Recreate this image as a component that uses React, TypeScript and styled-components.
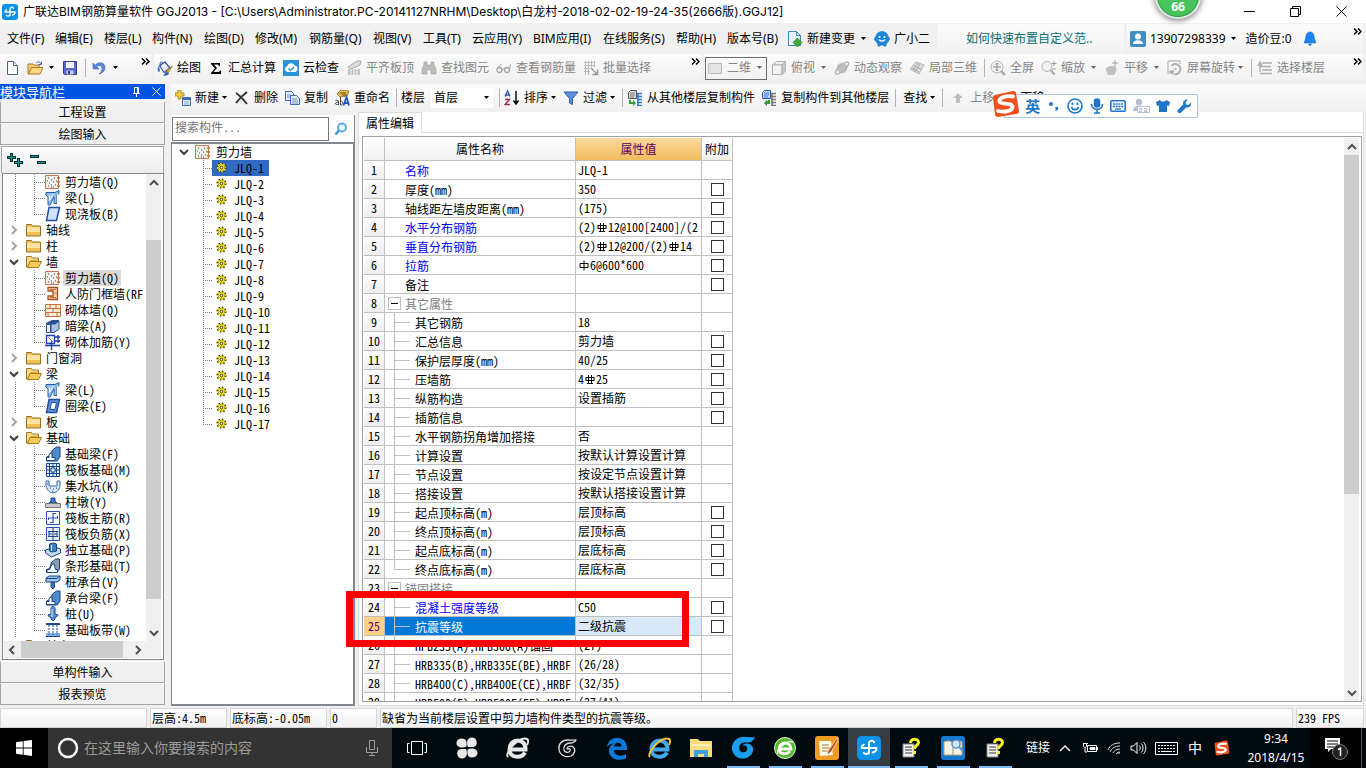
import React from 'react';
import styled, { createGlobalStyle, css } from 'styled-components';

const uiFont = '"Noto Sans", "Noto Sans CJK SC", sans-serif';
const gridFont = '"Noto Sans Mono CJK SC", "Noto Sans CJK SC", monospace';

const Global = createGlobalStyle`
  *, *::before, *::after { box-sizing: border-box; }
  body { margin: 0; background: #f0f0f0; }
  button, input, select { font: inherit; color: inherit; margin: 0; padding: 0; border: 0; background: none; border-radius: 0; }
  ul { list-style: none; margin: 0; padding: 0; }
  svg { display: block; flex: none; }
`;

const Shell = styled.div`
  position: relative;
  display: flex;
  flex-direction: column;
  height: 100vh;
  overflow: hidden;
  font: 12px/16px ${uiFont};
  color: #000;
  background: #f0f0f0;
  white-space: nowrap;
`;

/* ---------- title and menu ---------- */

const TitleBar = styled.header`
  display: flex;
  align-items: center;
  flex: none;
  height: 23px;
  padding-left: 2px;
  background: #fff;
`;
const Title = styled.h1`
  flex: 1;
  margin: 0 0 0 5px;
  font: 400 12px/16px "Inter", "Noto Sans CJK SC", sans-serif;
`;
const WindowButton = styled.button`
  display: flex;
  justify-content: center;
  align-items: center;
  width: 46px;
  height: 20px;
`;
const WindowButtons = styled.div`
  display: flex;
  padding-right: 2px;
`;

const MenuBar = styled.nav`
  display: flex;
  align-items: center;
  flex: none;
  height: 31px;
  padding: 1px 0 1px 7px;
`;
const MenuItem = styled.button<{ $w: number }>`
  width: ${p => p.$w}px;
  flex: none;
  text-align: left;
`;
const MenuPanel = styled.div<{ $grow?: boolean }>`
  display: flex;
  align-items: center;
  height: 29px;
  flex: ${p => (p.$grow ? '1' : '0 0 187px')};
  margin-right: 3px;
  background: linear-gradient(#fbfbfb, #f3f3f3);
  padding-left: 3px;
`;
const Tip = styled.a`
  padding-left: 26px;
  color: #0a6e6e;
  text-decoration: none;
`;
const UserName = styled.button`
  display: flex;
  align-items: center;
  gap: 4px;
`;
const Coins = styled.span`
  margin: 0 10px 0 9px;
`;
const Spacer = styled.span`
  flex: 1;
`;
const More = styled.button`
  align-self: flex-start;
  width: 12px;
  height: 15px;
  display: flex;
  align-items: center;
  justify-content: center;
`;

/* ---------- tool bars ---------- */

const ToolRow = styled.div`
  display: flex;
  flex: none;
  height: 30px;
  gap: 3px;
  padding-right: 3px;
`;
const Band = styled.div<{ $w?: number; $pad?: number; $gap?: number }>`
  display: flex;
  align-items: center;
  gap: ${p => p.$gap ?? 7}px;
  height: 28px;
  padding-left: ${p => p.$pad ?? 4}px;
  ${p => (p.$w ? `flex: 0 0 ${p.$w}px;` : 'flex: 1;')}
  background: linear-gradient(#fcfcfc, #f0f0f0);
  min-width: 0;
`;
const ComponentBar = styled(Band)`
  flex: 0 0 28px;
`;
const ToolButton = styled.button<{ $off?: boolean }>`
  display: flex;
  align-items: center;
  gap: 4px;
  flex: none;
  color: ${p => (p.$off ? '#868686' : '#000')};
`;
const CaretBox = styled.span<{ $tight?: boolean }>`
  margin-left: ${p => (p.$tight ? -2 : 1)}px;
`;
const Sep = styled.span<{ $room?: boolean }>`
  flex: none;
  width: 1px;
  height: 18px;
  margin-right: ${p => (p.$room ? 1 : -2)}px;
  background: #b4b4b4;
`;
const ComboFrame = styled.label<{ $boxed?: boolean }>`
  display: flex;
  align-items: center;
  flex: none;
  gap: 4px;
  width: 62px;
  height: ${p => (p.$boxed ? 23 : 20)}px;
  margin-right: ${p => (p.$boxed ? -3 : 0)}px;
  padding: 0 3px 0 ${p => (p.$boxed ? 1 : 3)}px;
  border: ${p => (p.$boxed ? '1px solid #6e6e6e' : '0')};
  background: ${p => (p.$boxed ? 'transparent' : '#fff')};
  color: ${p => (p.$boxed ? '#868686' : '#000')};
`;
const Combo = styled.select`
  appearance: none;
  flex: 1;
  min-width: 0;
  outline: 0;
`;

/* ---------- left navigation ---------- */

const Body = styled.div`
  position: relative;
  display: flex;
  flex: 1;
  min-height: 0;
`;
const Nav = styled.aside`
  display: flex;
  flex-direction: column;
  flex: 0 0 165px;
  padding-bottom: 1px;
  font-family: ${gridFont};
`;
const NavHead = styled.div`
  display: flex;
  align-items: center;
  flex: none;
  height: 15px;
  margin-bottom: 2px;
  padding-right: 4px;
  gap: 11px;
  background: #0054e3;
  color: #fff;
`;
const NavTitle = styled.h2`
  flex: 1;
  margin: 0;
  font-size: 13px;
  line-height: 15px;
  font-weight: 400;
`;
const NavButton = styled.button`
  flex: none;
  height: 22px;
  border: 1px solid #a5a5a5;
  border-top-color: #fff;
  background: #f0f0f0;
  text-align: center;
`;
const NavTools = styled.div`
  display: flex;
  align-items: center;
  flex: none;
  height: 27px;
  margin: 1px 1px 0;
  padding-left: 5px;
  gap: 7px;
  border: 1px solid #a5a5a5;
  border-bottom: 0;
  background: linear-gradient(#fdfdfd, #ececec);
`;
const TreeFrame = styled.div`
  display: grid;
  grid-template-columns: 1fr 15px;
  grid-template-rows: 1fr 17px;
  flex: 1;
  min-height: 0;
  margin: 0 1px 1px 2px;
  padding: 0 2px 1px 1px;
  border: 1px solid #828790;
  background: #fff;
`;
const Tree = styled.ul`
  overflow: hidden;
  min-height: 0;
`;
const Bar = styled.div<{ $flat?: boolean }>`
  display: flex;
  flex: none;
  flex-direction: ${p => (p.$flat ? 'row' : 'column')};
  align-items: stretch;
  background: #f0f0f0;
`;
const GridBar = styled(Bar)`
  width: 15px;
  margin-right: 2px;
`;
const Arrow = styled.button`
  display: flex;
  align-items: center;
  justify-content: center;
  flex: 0 0 17px;
`;
const Track = styled.span<{ $grow: number }>`
  flex: ${p => p.$grow};
`;
const Thumb = styled(Track)`
  background: #cdcdcd;
`;
const Corner = styled.div`
  background: #f0f0f0;
`;

const dotsV = 'repeating-linear-gradient(#808080 0 1px, transparent 1px 2px)';
const dotsH = 'repeating-linear-gradient(90deg, #808080 0 1px, transparent 1px 2px)';

const Node = styled.li<{ $level: number; $last?: boolean }>`
  display: flex;
  align-items: center;
  height: 16px;
  padding-left: ${p => (p.$level ? 41 : 3)}px;
  ${p =>
    p.$level &&
    css`
      background:
        ${dotsV} 11px 0 / 1px 100% no-repeat,
        ${dotsV} 30px 0 / 1px ${p.$last ? '9px' : '100%'} no-repeat,
        ${dotsH} 30px 8px / 11px 1px no-repeat;
    `}
`;
const Chevron = styled.span`
  width: 16px;
  margin-right: 3px;
  padding-left: 1px;
`;
const NodeText = styled.span<{ $on?: boolean }>`
  height: 16px;
  margin-left: 2px;
  padding: 0 2px;
  background: ${p => (p.$on ? '#d9d9d9' : 'transparent')};
`;

/* ---------- component list ---------- */

const Work = styled.div`
  display: flex;
  flex-direction: column;
  flex: 1;
  min-width: 0;
  padding: 0 0 0 6px;
`;
const Columns = styled.div`
  display: flex;
  flex: 1;
  min-height: 0;
  gap: 3px;
  padding-right: 2px;
`;
const ListPanel = styled.section`
  display: flex;
  flex-direction: column;
  flex: 0 0 184px;
  margin: 3px 0 0;
  font-family: ${gridFont};
`;
const SearchRow = styled.div`
  display: flex;
  align-items: center;
  flex: none;
  height: 27px;
  padding: 1px;
  background: #fff;
  border-right: 1px solid #828790;
`;
const Search = styled.input`
  flex: 1;
  min-width: 0;
  height: 24px;
  padding: 0 2px 4px;
  border: 1px solid #7a7a7a;
  background: #fff;
  &::placeholder { color: #757575; opacity: 1; }
`;
const SearchButton = styled.button`
  display: flex;
  align-items: center;
  justify-content: center;
  width: 24px;
`;
const ListBox = styled.ul`
  flex: 1;
  min-height: 0;
  overflow: hidden;
  border: 1px solid #828790;
  border-width: 2px 2px 2px 1px;
  background: #fff;
`;
const RootItem = styled.li`
  display: flex;
  align-items: center;
  height: 16px;
  padding-left: 6px;
  gap: 5px;
`;
const Item = styled.li<{ $last?: boolean }>`
  display: flex;
  height: 16px;
  padding-left: 40px;
  background:
    ${dotsV} 31px 0 / 1px ${p => (p.$last ? '9px' : '100%')} no-repeat,
    ${dotsH} 31px 8px / 10px 1px no-repeat;
`;
const ItemLabel = styled.span<{ $on?: boolean }>`
  display: flex;
  align-items: center;
  gap: 6px;
  padding: 0 5px 0 4px;
  background: ${p => (p.$on ? '#316ac5' : 'transparent')};
`;

/* ---------- property editor ---------- */

const Editor = styled.section`
  display: flex;
  flex-direction: column;
  flex: 1;
  min-width: 0;
  border: 1px solid #dcdcdc;
  border-top: 0;
  background: #fff;
  font-family: ${gridFont};
`;
const TabStrip = styled.div`
  display: flex;
  flex: none;
  height: 21px;
`;
const Tab = styled.button`
  width: 63px;
  border-right: 1px solid #dcdcdc;
  border-top: 1px solid #dcdcdc;
`;
const TabRest = styled.span`
  flex: 1;
  border-bottom: 1px solid #dcdcdc;
`;
const GridFrame = styled.div`
  display: flex;
  flex: 1;
  min-height: 0;
  margin: 3px 1px 3px 3px;
  padding: 1px 0 0 1px;
  border: 1px solid #a0a0a0;
`;
const GridView = styled.div`
  flex: 1;
  min-width: 0;
  overflow: hidden;
`;
const Table = styled.table`
  width: 369px;
  table-layout: fixed;
  border-collapse: separate;
  border-spacing: 0;
`;
const Head = styled.th<{ $w: number; $hot?: boolean }>`
  width: ${p => p.$w}px;
  height: 23px;
  padding: 0;
  font-weight: 400;
  border-right: 1px solid #bfbfbf;
  border-bottom: 1px solid #bfbfbf;
  background: ${p => (p.$hot ? 'linear-gradient(#fad79b, #f2bd5f)' : 'linear-gradient(#fff, #f0f0f0)')};
  color: ${p => (p.$hot ? '#5b005b' : '#000')};
`;
const RowHead = styled.th<{ $on?: boolean }>`
  height: 19px;
  padding: 0;
  font-weight: 400;
  line-height: 16px;
  border-right: 1px solid #bfbfbf;
  border-bottom: 1px solid #bfbfbf;
  background: ${p => (p.$on ? '#ffd08a' : 'linear-gradient(#fcfcfc, #eee)')};
  color: ${p => (p.$on ? '#5b005b' : '#000')};
`;
const Cell = styled.td<{ $bg?: string; $color?: string }>`
  height: 19px;
  padding: 0;
  border-right: 1px solid #bfbfbf;
  border-bottom: 1px solid #bfbfbf;
  background: ${p => p.$bg ?? '#fff'};
  color: ${p => p.$color ?? '#000'};
`;
const NameLine = styled.div`
  display: flex;
  height: 18px;
  padding-top: 2px;
  overflow: hidden;
  line-height: 16px;
`;
const Guide = styled.span<{ $kind: 'none' | 'group' | 'mid' | 'last' }>`
  flex: none;
  width: ${p => (p.$kind === 'mid' || p.$kind === 'last' ? 30 : 20)}px;
  height: 18px;
  margin-top: -2px;
  padding: 3px 0 0 3px;
  ${p =>
    (p.$kind === 'mid' || p.$kind === 'last') &&
    css`
      background:
        linear-gradient(#bfbfbf, #bfbfbf) 9px 0 / 1px ${p.$kind === 'last' ? '9px' : '100%'} no-repeat,
        linear-gradient(#bfbfbf, #bfbfbf) 9px 9px / 16px 1px no-repeat;
    `}
`;
const Fold = styled.button`
  display: flex;
  align-items: center;
  justify-content: center;
  width: 13px;
  height: 13px;
  border: 1px solid #bfbfbf;
`;
const ValueLine = styled.div`
  display: flex;
  align-items: center;
  height: 18px;
  padding-left: 2px;
  overflow: hidden;
  line-height: 16px;
`;
const Check = styled.input`
  appearance: none;
  display: block;
  width: 13px;
  height: 13px;
  margin: 1px auto 0;
  border: 1px solid #333;
  background: #fff;
`;

const Highlight = styled.div`
  position: absolute;
  left: 346px;
  top: 507px;
  width: 343px;
  height: 56px;
  border: 7px solid #f00;
  pointer-events: none;
`;

/* ---------- status bar and task bar ---------- */

const Status = styled.footer`
  display: flex;
  flex: none;
  gap: 3px;
  height: 22px;
  padding: 2px 2px 0 0;
  font-family: ${gridFont};
`;
const StatusCell = styled.span<{ $w?: number }>`
  ${p => (p.$w ? `flex: 0 0 ${p.$w}px;` : 'flex: 1;')}
  padding-left: 1px;
  line-height: 18px;
  border: 1px solid #d6d6d6;
  background: linear-gradient(#fff, #f0f0f0);
`;

const TaskBar = styled.footer`
  display: flex;
  flex: none;
  height: 40px;
  background: #010b0f;
  color: #fff;
`;
const Start = styled.button`
  display: flex;
  align-items: center;
  justify-content: center;
  width: 48px;
  background: #000;
`;
const TaskSearch = styled.label`
  display: flex;
  align-items: center;
  flex: 0 0 344px;
  gap: 4px;
  padding: 0 13px 0 8px;
  background: #333;
  color: #9c9c9c;
`;
const TaskInput = styled.input`
  flex: 1;
  min-width: 0;
  font-size: 14px;
  line-height: 20px;
  &::placeholder { color: #9a9a9a; opacity: 1; }
`;
const TaskApp = styled.button<{ $wide?: boolean; $open?: boolean; $on?: boolean }>`
  display: flex;
  align-items: center;
  justify-content: center;
  width: ${p => (p.$wide ? 50 : 42)}px;
  background: ${p => (p.$on ? '#343e42' : 'transparent')};
  background-image: ${p =>
    p.$open ? 'linear-gradient(#7cb8f5, #7cb8f5)' : 'none'};
  background-repeat: no-repeat;
  background-position: ${p => (p.$on ? '0 100%' : '5px 100%')};
  background-size: ${p => (p.$on ? '100% 2px' : '33px 2px')};
`;
const Pinned = styled.div`
  display: flex;
  margin-right: 4px;
`;
const Tray = styled.div`
  display: flex;
  align-items: center;
  flex: 1;
  justify-content: flex-end;
`;
const TrayItem = styled.button<{ $w: number }>`
  display: flex;
  align-items: center;
  justify-content: center;
  flex: none;
  width: ${p => p.$w}px;
  height: 40px;
`;
const InputMode = styled(TrayItem)`
  font-size: 14px;
`;
const Clock = styled.time`
  width: 68px;
  margin-left: 6px;
  text-align: center;
  line-height: 19px;
`;
const Notice = styled.button`
  display: flex;
  align-items: center;
  align-self: stretch;
  width: 52px;
  padding-left: 14px;
  margin-right: 4px;
  background: #000;
  border-right: 1px solid #555;
`;

/* ---------- floating pieces ---------- */

const Ball = styled.div`
  position: absolute;
  right: 165px;
  top: -26px;
  width: 46px;
  height: 45px;
  padding-top: 23px;
  border-radius: 50%;
  border: 2px solid #e2e6e3;
  background: #46c45b;
  box-shadow: inset 0 0 0 1px #2f9a45, 0 1px 6px rgba(0, 0, 0, 0.6);
  color: #fff;
  font-weight: 700;
  font-size: 12px;
  text-align: center;
`;
const Ime = styled.div`
  position: absolute;
  right: 168px;
  top: 94px;
  display: flex;
  align-items: center;
  width: 194px;
  height: 24px;
  padding-left: 17px;
  border: 1px solid #b3c5dc;
  background: #fff;
  color: #1f76c8;
`;
const ImeLogo = styled.span`
  position: absolute;
  left: -13px;
  top: -5px;
`;
const ImeKey = styled.button<{ $w?: number }>`
  display: flex;
  justify-content: center;
  width: ${p => p.$w ?? 22}px;
  font-size: 15px;
  font-weight: 700;
  line-height: 22px;
`;

/* ---------- small drawings ---------- */

const Caret = ({ color = '#000' }: { color?: string }) => (
  <svg width="7" height="4" viewBox="0 0 7 4"><path d="M1 0h5L3.5 3z" fill={color} /></svg>
);
const MoreMark = () => (
  <svg width="9" height="7" viewBox="0 0 9 7"><path d="M1 .5l3 3-3 3M5 .5l3 3-3 3" fill="none" stroke="#000" strokeWidth="1.5" /></svg>
);
const Chev = ({ dir, color = '#505050' }: { dir: 'up' | 'down' | 'left' | 'right'; color?: string }) => {
  const d = { up: 'M2 8l4-4 4 4', down: 'M2 4l4 4 4-4', left: 'M7 2L3 6l4 4', right: 'M4 2l4 4-4 4' }[dir];
  return <svg width="12" height="12" viewBox="0 0 12 12"><path d={d} fill="none" stroke={color} strokeWidth="2" /></svg>;
};
const Ic = ({ children, size = 16 }: { children: React.ReactNode; size?: number }) => (
  <svg width={size} height={size} viewBox="0 0 16 16" fill="none">{children}</svg>
);
const AppMark = ({ size = 16 }: { size?: number }) => (
  <Ic size={size}>
    <rect width="16" height="16" rx="3" fill="#0b93ea" />
    <path d="M3 8h10M8 11.500V5a1.800 1.800 0 0 1 3.400-.8M8 10.500a2 2 0 0 1-3.500.8M13 8a3 3 0 0 1-2.500 3M3 8a2.500 2.500 0 0 1 1.500-2.200" stroke="#fff" strokeWidth="1.300" strokeLinecap="round" />
  </Ic>
);

const icons: Record<string, React.ReactNode> = {
  fresh: <><path d="M3.500 1.500h6l4 4v9h-10z" fill="#fff" stroke="#47608f" /><path d="M9.500 1.500v4h4" stroke="#47608f" fill="#dce8fa" /></>,
  open: <><path d="M1 4h5l1 1h5v3H5l-3 6H1z" fill="#f3cd74" stroke="#a97b28" /><path d="M4.500 7.500H16l-3 6.500H1.500z" fill="#fbd983" stroke="#a97b28" /><path d="M9 3c2-2 4-1 5 1M14.500 1.500v3h-3" stroke="#44608f" /></>,
  save: <><path d="M1.500 1.500h13v13h-12l-1-1z" fill="#5d68c8" stroke="#2f3a92" /><path d="M4 2h8v6H4z" fill="#f1f3fc" /><path d="M4.500 10.500h7v4h-7z" fill="#c7cdf0" /><path d="M6 11h2v3H6z" fill="#2f3a92" /></>,
  undo: <path d="M2 3v6h6L5.800 6.800C8 4.500 11 5.500 11 8.500c0 2.500-1.500 4-3 5.500 4-1 6-3.500 6-6.500C14 2.500 8 1 4.200 5.200z" fill="#5a86dc" stroke="#3960b8" strokeWidth=".6" />,
  paint: <><path d="M2.500 5.500L8 2l5 6-6 4.500z" fill="#e4ebf6" stroke="#2f5590" strokeWidth="1.200" /><path d="M4 6C2 3 4 0 6 3" stroke="#2f5590" /><path d="M1.500 6c-1.500 3-1 6 .5 6s1-4-.5-6z" fill="#3d7cd0" /><path d="M15.500 6l-4 6.500-2-1.500z" fill="#e7b13c" stroke="#8b6015" strokeWidth=".6" /><path d="M9 11l3 2.500c-1 2-3 2.500-6 2 2-1 2-3 3-4.500z" fill="#2e62bd" /></>,
  sigma: <path d="M3 3h9v3h-1l-1-1.500H6L9 8l-3.500 4H11l1-1.500h1V14H3v-1l4-4.800L3 4z" fill="#000" />,
  cloud: <><rect width="16" height="16" fill="#2a93d8" /><path d="M4.500 12a3 3 0 0 1-.5-5.800 4 4 0 0 1 7.500-.7A3.300 3.300 0 0 1 12 12z" fill="#fff" /><path d="M5.500 8.500l2 2L11 7" stroke="#2a93d8" strokeWidth="1.500" /></>,
  flush: <><path d="M2 7l9-6h4l-1 4-9 4z" fill="#ddd" stroke="#a8a8a8" /><path d="M2 9h12v6H2z" fill="#c4c4c4" /><path d="M5 9v6M8 9v6M11 9v6" stroke="#f4f4f4" /></>,
  find: <path d="M3 2h3v3h4V2h3v3l2 4v5h-5v-4H6v4H1V9l2-4z" fill="#bdbdbd" stroke="#a0a0a0" strokeWidth=".6" />,
  glasses: <><circle cx="3.500" cy="10" r="2.500" stroke="#a6a6a6" strokeWidth="1.300" /><circle cx="11" cy="10" r="2.500" stroke="#a6a6a6" strokeWidth="1.300" /><path d="M6 9h2.500M13.500 9l1-5M2 8l3-4" stroke="#a6a6a6" /></>,
  batch: <><path d="M1 2.500h11M1 5.500h11M1 8.500h6M1 11.500h6M2.500 1v14M5.500 1v14M8.500 1v6M11.500 1v6" stroke="#bababa" /><path d="M8 8l6 6M14.500 9.500v5h-5" stroke="#999" strokeWidth="1.400" /></>,
  plane: <path d="M1.500 3.500h13v10h-13z" fill="#e4e4e4" stroke="#b9b9b9" />,
  cube: <><path d="M1.500 5l4-3.500h9L11 5z" fill="#eee" stroke="#b0b0b0" /><path d="M1.500 5H11v9.500H1.500z" fill="#f3f3f3" stroke="#b0b0b0" /><path d="M11 5l3.500-3.500V11L11 14.500z" fill="#c4c4c4" stroke="#b0b0b0" /></>,
  orbit: <><circle cx="8" cy="8" r="5.300" fill="#c1c1c1" /><ellipse cx="8" cy="8" rx="8.500" ry="2.800" transform="rotate(-42 8 8)" stroke="#b0b0b0" strokeWidth="1.200" /></>,
  local3d: <><path d="M1 9l6-7 8 3-5 9z" fill="#dedede" stroke="#b4b4b4" /><path d="M4.500 5.500l8 4M11 3.500L6 12M3 8l7 4M9 3L4 10" stroke="#aaa" /></>,
  full: <><circle cx="7" cy="7" r="6" stroke="#b5b5b5" fill="#f2f2f2" /><path d="M7 3v8M3 7h8M5.800 4.500L7 3l1.200 1.500M5.800 9.500L7 11l1.200-1.500" stroke="#8f8f8f" /><path d="M11 11l4 4" stroke="#b0b0b0" strokeWidth="2.500" /></>,
  zoom: <><circle cx="6" cy="6.500" r="5" stroke="#b5b5b5" fill="#f2f2f2" /><path d="M9.500 10l4 4.500" stroke="#b0b0b0" strokeWidth="2.500" /><path d="M13 1v5M10.500 3.500h5M11 9h4" stroke="#9d9d9d" /></>,
  pan: <><path d="M2 9c0-3 3-1 3-3h6c2 2 2 6-1 9H4c0-2-2-3-2-6z" fill="#c0c0c0" /><path d="M11 0v6M8 3h6" stroke="#a0a0a0" /></>,
  spin: <><path d="M1 1h12v3M1 1v12h3" stroke="#c0c0c0" strokeWidth="1.500" /><path d="M4.500 6a5 5 0 1 1 2.500 8" stroke="#b0b0b0" strokeWidth="2" /><path d="M2 11l5-1-1 5z" fill="#a5a5a5" /><circle cx="8.500" cy="9" r="1.200" fill="#b5b5b5" /></>,
  floors: <path d="M5 3h10M3 6.500h11M5 10h10M3 13.500h12M3 2v10M1 6l2-4 2 4" stroke="#b0b0b0" strokeWidth="1.500" />,
  add: <><path d="M3 0h3v3h3v3H6v3H3V6H0V3h3z" fill="#f6cf3c" stroke="#9a7d14" strokeWidth=".8" /><path d="M7.500 7.500h8v8h-8z" fill="#dfeafb" stroke="#3f6db5" /><path d="M8 8h7v2H8z" fill="#3f6db5" /><path d="M9 12h5M9 14h5" stroke="#8caada" /></>,
  del: <path d="M2 3c3 2 7 6 11 11M13 2C9 5 5 9 2 13" stroke="#333" strokeWidth="2" />,
  copy: <><path d="M1.500 1.500h6l2 2v7h-8z" fill="#e3edfb" stroke="#3c68b4" /><path d="M6.500 5.500h6l3 3v6h-9z" fill="#e3edfb" stroke="#3c68b4" /><path d="M3 5h4M3 7h3M8 9h5M8 11h6M8 13h6" stroke="#6d92cf" /></>,
  rename: <><path d="M3 4l4-4 8 1-2 5-7 1z" fill="#e9bb4c" stroke="#7c5d16" strokeWidth=".7" /><path d="M6 3h6M8 5h4" stroke="#5c470f" /><path d="M1.500 10.500c2-1 3 0 3 1.500v3M4.500 12c-5 0-3 4 0 2M6.500 7v8c3 0 3-4 0-4" stroke="#333" strokeWidth=".9" /><path d="M9.500 15.500L12.500 7l2.500 8.500M10.500 13h4" stroke="#2658b5" strokeWidth="1.800" /></>,
  sort: <><path d="M1 6.500L3.500 1 6 6.500M2 5h3" stroke="#2c4f9c" strokeWidth="1.300" /><path d="M1 9.500h4.500L1 14.500h5" stroke="#9c2c3a" strokeWidth="1.300" /><path d="M12 1v12M9.500 10.500L12 14l2.500-3.500" stroke="#000" strokeWidth="1.400" /></>,
  filter: <path d="M1 2h14L9.500 8.500v6l-3-1.500V8.500z" fill="#5b8edc" stroke="#2d5cae" />,
  fromFloor: <><path d="M3.500.500h6v8h-8v-6z" fill="#ddd" stroke="#555" /><path d="M3 3h5M3 5h5M3 7h4" stroke="#777" /><path d="M10 3.500h5M10 6.500h5M10 9.500h5M10 12.500h5M10 15.500h5M11 3v12" stroke="#3c76cc" strokeWidth="1.600" /><path d="M2 10h2v2h2v-2l3 3-3 3v-2H2z" fill="#2f9a3a" /></>,
  toFloor: <><path d="M3.500.500h6v8h-8v-6z" fill="#c3d8f6" stroke="#2c58a8" /><path d="M3 3h5M3 5h5M3 7h4" stroke="#3c76cc" /><path d="M10 3.500h5M10 6.500h5M10 9.500h5M10 12.500h5M10 15.500h5M11 3v12" stroke="#777" strokeWidth="1.600" /><path d="M9 10v4H6v2l-3-3 3-3v1h1v-1z" fill="#2f9a3a" /></>,
  up: <path d="M8 3l5 5h-3v5H6V8H3z" fill="#bdbdbd" />,
  change: <><path d="M1.500.500h8l4 4v10h-12z" fill="#e9f5fc" stroke="#3a8bb5" /><path d="M9.500.500v4h4" stroke="#3a8bb5" /><path d="M10.500 7L15 11.500 10.500 16 6 11.500z" fill="#39a935" stroke="#26701f" strokeWidth=".6" /></>,
  robot: <><path d="M2 6c0-7 12-7 12 0 2 0 2 4 0 4 0 1-1 2-2 3v2h-2v-1H6v1H4v-2c-1-1-2-2-2-3-2 0-2-4 0-4z" fill="#1c86dc" stroke="#1c86dc" /><circle cx="5.500" cy="6" r="1.100" fill="#fff" /><circle cx="10.500" cy="6" r="1.100" fill="#fff" /><path d="M5 8.500c1 2 5 2 6 0" stroke="#fff" strokeWidth="1.300" /></>,
  user: <><rect width="16" height="16" rx="2" fill="#3f8fc4" /><circle cx="8" cy="5.500" r="3" fill="#fff" /><path d="M3 13c0-5 10-5 10 0z" fill="#fff" /></>,
  bell: <path d="M8 1c4 0 4 4 4.500 7l1.500 4H2l1.500-4C4 5 4 1 8 1zM6.500 13h3L8 15z" fill="#1e86f0" stroke="#0a5ab8" strokeWidth=".5" />,
  search: <><circle cx="9" cy="6.500" r="4" stroke="#5ab0e6" strokeWidth="2" fill="#eaf6fd" /><path d="M6 9.500L2.500 13.500" stroke="#3d97d4" strokeWidth="2.500" /></>,
  folder: <><path d="M.5 4.500v-2h5l1 1.500h8v10H.5z" fill="#f0bf55" stroke="#98701f" /><path d="M1 5h13v5H1z" fill="#fae3a0" /></>,
  folderOpen: <><path d="M.5 2.500h5l1 1.500h6v3H5l-3 6H.5z" fill="#f6d77e" stroke="#a8781d" /><path d="M4 7.500h11.500l-3 6h-11z" fill="#f9c957" stroke="#a8781d" /></>,
  wall: <><path d="M.5 1.500h13v13H.5z" fill="#f1eeee" stroke="#c97450" /><path d="M3 4h1M6 6h1M9 4h1M4 9h1M8 8h1M3 12h1M6 11h1M10 11h1M8 13h1M2 7h1M11 7h1M6 13h1" stroke="#444" /><path d="M12 4h3M12 8h3M12 12h3" stroke="#d06c20" strokeWidth="1.300" /></>,
  beam: <><path d="M1 2.500h9l4-2v3l-2 2v8h-3V7l-4 8H3V7L1 5z" fill="#8fbfe8" stroke="#1f62ad" /><path d="M5 5l-1 6M8 4l-3 6M12.500 4.500v9" stroke="#fff" /></>,
  slab: <path d="M4 1.500h10.500l-3 13H1.500z" fill="#cfe2fa" stroke="#1f4fa5" strokeWidth="1.500" />,
  ring: <><path d="M4 1.500h10.500l-3 13H1.500z" fill="#5f93d6" stroke="#1f4fa5" strokeWidth="1.500" /><path d="M6.500 4.500h5l-1.500 7h-5z" fill="#fff" stroke="#1f4fa5" /></>,
  frame: <><path d="M3 1.500h9.500v12H3v-3.500h5V5H3z" fill="#f8d2b4" stroke="#a3521c" strokeWidth="1.300" /><path d="M5 3.500h6M5 11.500h6M8 7h4" stroke="#c4723a" /></>,
  brick: <><path d="M.5 2.500h15v12H.5z" fill="#fbe9dc" stroke="#c4723a" /><path d="M1 6.500h14M1 10.500h14M5 3v3M11 3v3M8 7v3M3 11v3M12 11v3" stroke="#c4723a" /></>,
  hidden: <><path d="M1 5l6-3h7v2l-4 2H1z" fill="#284f8e" /><path d="M1.500 6.500h4v8h-4z" fill="#e4edf8" stroke="#284f8e" /><path d="M6 6h4l4-3v8l-5 3.500H6z" fill="#a8c1e4" stroke="#284f8e" /></>,
  tie: <><path d="M1.500 1.500h8v8h-8z" stroke="#1b3fa8" strokeWidth="1.300" /><path d="M0 11.500h15M6.500 6v10M10 3h5M10 7h5M13 1v8" stroke="#1b3fa8" strokeWidth="1.300" /><path d="M3 3l5 5" stroke="#888" /></>,
  fbeam: <><path d="M1.500 15v-4l3-1 3-6 4-3h3.500v10l-3 4z" fill="#4f8ccd" stroke="#14457f" /><path d="M1.500 14.500v-3H4v-3l3-2v5h3v3z" fill="#fff" stroke="#14457f" /></>,
  raft: <><path d="M1.500 1.500h13v13h-13z" fill="#e9f1fb" stroke="#17488a" /><path d="M4.500 2v12M11.500 2v12M2 4.500h12M2 11.500h12M8 2v4M8 10v4M2 8h4M10 8h4M6 6h4v4H6z" stroke="#17488a" /></>,
  pit: <><path d="M1 3h3v5h8V3h3v5c-2 9-12 9-14 0z" fill="#dce9f9" stroke="#3569b8" /><path d="M5 10h1M8 11h1M11 10h1M7 13h1M2 6h1" stroke="#1f4fa5" /></>,
  pier: <><path d="M4 9l2-2V4h4v3l2 2z" fill="#3b7ccb" stroke="#17488a" /><path d="M.5 9.500h15v4H.5z" fill="#c9c9c9" stroke="#777" /></>,
  mainbar: <><path d="M1.500 1.500h13v13h-13z" fill="#fff" stroke="#2b50b8" /><path d="M8 3v10M3 8h10M8 3.500h3M3.500 8v2M8 12.500H5M12.500 6v2" stroke="#2b50b8" strokeWidth="1.200" /></>,
  negbar: <><path d="M1.500 1.500h13v13h-13z" fill="#e6eefb" stroke="#2b50b8" /><path d="M8 2v12" stroke="#777" strokeWidth="1.500" /><path d="M3 5.500h10M3 10.500h10M4 5v3h3M12 5v3H9M4 8v3M12 8v3" stroke="#17488a" /></>,
  isolated: <><path d="M.5 8l9-3 6 2v4l-9 4-6-4z" fill="#c3daf3" stroke="#14457f" /><path d="M4.500 2l4-1 3 1v7l-4 1-3-1z" fill="#3f80c8" stroke="#14457f" /><path d="M6.500 3v6" stroke="#cfe2f7" /></>,
  strip: <><path d="M1.500 14.500v-3l3-1 2-6 4-3.500h4V11l-3 3.500z" fill="#8a9db5" stroke="#14457f" /><path d="M2 14.500v-3h2.500L7 6h2l1.500 5.500h2v3z" fill="#fff" stroke="#14457f" /></>,
  cap: <><path d="M1 4l3-2h11v4l-3 2H1z" fill="#9cc4ee" stroke="#14457f" /><path d="M1 4.500h10.500l3-2" stroke="#14457f" /><path d="M6 8.500h3.500V13L8 15l-2-2z" fill="#3f80c8" stroke="#14457f" /></>,
  pile: <><path d="M6 2c1-2 3-2 4 0v6l3 1c0 1-1 2-3 2v2l-2 2-2-2v-2c-2 0-3-1-3-2l3-1z" fill="#5b97d8" stroke="#14457f" /><path d="M7 3v8" stroke="#dbe9f8" /></>,
  band: <><path d="M1 2h14M1 14h14" stroke="#17488a" strokeWidth="2" /><path d="M1 11h14v3H1z" fill="#7fb0ea" /><path d="M4 3v10M8 3v10M12 3v10" stroke="#17488a" strokeDasharray="2 1" /></>,
};
const Icon = ({ name }: { name: string }) => <Ic>{icons[name]}</Ic>;

const Gear = () => (
  <svg width="12" height="12" viewBox="0 0 12 12" fill="none">
    <circle cx="5.500" cy="5.500" r="4.500" fill="#f5ee2a" stroke="#2b2a00" strokeWidth="1.200" strokeDasharray="1.500 2" />
    <circle cx="5.500" cy="5.500" r="3.200" stroke="#6b6600" strokeWidth=".8" strokeDasharray="1.500 1" />
    <circle cx="5.500" cy="5.500" r="1.300" fill="#fff" stroke="#222" strokeWidth=".9" />
  </svg>
);
const Rebar = ({ grade }: { grade: 1 | 3 }) => (
  <svg width="12" height="12" viewBox="0 0 12 12" fill="none" stroke="#000">
    {grade === 3
      ? <path d="M2 4.500h8M2 4v4M10 4v4M2 7.500h8M4.500 2v9M7.500 2v9M3 10.500h6" />
      : <path d="M2 4.500h8v4H2zM6 1.500v10" />}
  </svg>
);

const Tool = ({ icon, text, off, caret, tight }: { icon?: string; text: string; off?: boolean; caret?: boolean; tight?: boolean }) => (
  <ToolButton $off={off}>
    {icon && <Icon name={icon} />}
    {text}
    {(caret || tight) && <CaretBox $tight={tight}><Caret color={off ? '#666' : '#000'} /></CaretBox>}
  </ToolButton>
);

/* ---------- data ---------- */

const menu: [string, number][] = [
  ['文件(F)', 48], ['编辑(E)', 49], ['楼层(L)', 48], ['构件(N)', 52], ['绘图(D)', 51], ['修改(M)', 54],
  ['钢筋量(Q)', 64], ['视图(V)', 50], ['工具(T)', 49], ['云应用(Y)', 61], ['BIM应用(I)', 70],
  ['在线服务(S)', 73], ['帮助(H)', 51], ['版本号(B)', 60],
];

type TreeRow = { t: string; i: string; l?: 1; open?: boolean; on?: boolean; last?: boolean };
const modules: TreeRow[] = [
  { t: '剪力墙(Q)', i: 'wall', l: 1 },
  { t: '梁(L)', i: 'beam', l: 1 },
  { t: '现浇板(B)', i: 'slab', l: 1, last: true },
  { t: '轴线', i: 'folder' },
  { t: '柱', i: 'folder' },
  { t: '墙', i: 'folderOpen', open: true },
  { t: '剪力墙(Q)', i: 'wall', l: 1, on: true },
  { t: '人防门框墙(RF', i: 'frame', l: 1 },
  { t: '砌体墙(Q)', i: 'brick', l: 1 },
  { t: '暗梁(A)', i: 'hidden', l: 1 },
  { t: '砌体加筋(Y)', i: 'tie', l: 1, last: true },
  { t: '门窗洞', i: 'folder' },
  { t: '梁', i: 'folderOpen', open: true },
  { t: '梁(L)', i: 'beam', l: 1 },
  { t: '圈梁(E)', i: 'ring', l: 1, last: true },
  { t: '板', i: 'folder' },
  { t: '基础', i: 'folderOpen', open: true },
  { t: '基础梁(F)', i: 'fbeam', l: 1 },
  { t: '筏板基础(M)', i: 'raft', l: 1 },
  { t: '集水坑(K)', i: 'pit', l: 1 },
  { t: '柱墩(Y)', i: 'pier', l: 1 },
  { t: '筏板主筋(R)', i: 'mainbar', l: 1 },
  { t: '筏板负筋(X)', i: 'negbar', l: 1 },
  { t: '独立基础(P)', i: 'isolated', l: 1 },
  { t: '条形基础(T)', i: 'strip', l: 1 },
  { t: '桩承台(V)', i: 'cap', l: 1 },
  { t: '承台梁(F)', i: 'fbeam', l: 1 },
  { t: '桩(U)', i: 'pile', l: 1 },
  { t: '基础板带(W)', i: 'band', l: 1, last: true },
  { t: '其它', i: 'folder' },
];

type Prop = { n: string; v?: React.ReactNode; k?: 'none' | 'group' | 'mid' | 'last'; blue?: boolean; c?: boolean; sel?: boolean };
const R3 = <Rebar grade={3} />;
const R1 = <Rebar grade={1} />;
const props: Prop[] = [
  { n: '名称', v: 'JLQ-1', blue: true },
  { n: '厚度(mm)', v: '350', c: true },
  { n: '轴线距左墙皮距离(mm)', v: '(175)', c: true },
  { n: '水平分布钢筋', v: <>(2){R3}12@100[2400]/(2</>, blue: true, c: true },
  { n: '垂直分布钢筋', v: <>(2){R3}12@200/(2){R3}14</>, blue: true, c: true },
  { n: '拉筋', v: <>{R1}6@600*600</>, blue: true, c: true },
  { n: '备注', c: true },
  { n: '其它属性', k: 'group' },
  { n: '其它钢筋', v: '18', k: 'mid' },
  { n: '汇总信息', v: '剪力墙', k: 'mid', c: true },
  { n: '保护层厚度(mm)', v: '40/25', k: 'mid', c: true },
  { n: '压墙筋', v: <>4{R3}25</>, k: 'mid', c: true },
  { n: '纵筋构造', v: '设置插筋', k: 'mid', c: true },
  { n: '插筋信息', k: 'mid', c: true },
  { n: '水平钢筋拐角增加搭接', v: '否', k: 'mid' },
  { n: '计算设置', v: '按默认计算设置计算', k: 'mid' },
  { n: '节点设置', v: '按设定节点设置计算', k: 'mid' },
  { n: '搭接设置', v: '按默认搭接设置计算', k: 'mid' },
  { n: '起点顶标高(m)', v: '层顶标高', k: 'mid', c: true },
  { n: '终点顶标高(m)', v: '层顶标高', k: 'mid', c: true },
  { n: '起点底标高(m)', v: '层底标高', k: 'mid', c: true },
  { n: '终点底标高(m)', v: '层底标高', k: 'last', c: true },
  { n: '锚固搭接', k: 'group' },
  { n: '混凝土强度等级', v: 'C50', k: 'mid', blue: true, c: true },
  { n: '抗震等级', v: '二级抗震', k: 'mid', c: true, sel: true },
  { n: 'HPB235(A),HPB300(A)锚固', v: '(27)', k: 'mid' },
  { n: 'HRB335(B),HRB335E(BE),HRBF', v: '(26/28)', k: 'mid' },
  { n: 'HRB400(C),HRB400E(CE),HRBF', v: '(32/35)', k: 'mid' },
  { n: 'HRB500(E),HRB500E(EE),HRBF', v: '(37/41)', k: 'mid' },
];
const nameColor = (p: Prop) => (p.sel ? '#fff' : p.blue ? '#0000ff' : p.k === 'group' ? '#808080' : '#000');

const GSwirl = ({ a, bold }: { a: string; bold?: boolean }) => (
  <svg width="24" height="24" viewBox="0 0 24 24" fill="none" stroke={a} strokeLinecap="round" strokeLinejoin="round">
    {bold
      ? <path d="M23 2c-5 0-8-1-12-.5C4 2.500 1 8 1.500 13c.5 6 6 10 12 9 5-1 9-5 8-10-1-4-6-5-9-3 3 0 5 2 4 5-1 3-6 4-8 1-2-4 0-9 5-9 4 0 7 1 9.500-4z" fill={a} />
      : <path d="M21 4c-2 .5-5 0-8 0-6 0-10 4-9 9.500 1 6 7 8.500 12 6.500 4-2 5-7 2-9-3-2-6 0-6 2 2-1 4 0 3 2-1 2-5 2-6-1-1-4 2-7 6-7 3 0 5-1 6-3z" strokeWidth="1.300" />}
  </svg>
);
const EMark = ({ a, b }: { a: string; b?: string }) => (
  <svg width="24" height="24" viewBox="0 0 24 24" fill="none">
    <path d="M4 13.500h16.500c.5-12-16-12-16 0 0 9 12 9 15.500 3" stroke={a} strokeWidth="4" />
    {b && <path d="M3 21C-1 17 14 0 22 3c2 1 1 4 0 6" stroke={b} strokeWidth="2" />}
  </svg>
);
const EdgeMark = () => (
  <svg width="24" height="24" viewBox="0 0 24 24">
    <path d="M2 11C4-2 22-1 22 12v2H9c0 6 7 7 12 4v4.500C12 26 4 22 4 15c0-4 2-6 5-7.500-3 0-5 1-7 3.500zM9 10.500h7.500c0-5-7-5-7.500 0z" fill="#0a78d7" fillRule="evenodd" />
  </svg>
);
const EDisc = () => (
  <svg width="24" height="24" viewBox="0 0 24 24" fill="none">
    <circle cx="12" cy="12" r="10.500" fill="#53b82c" stroke="#dff3d2" />
    <path d="M6 13h12c0-8-12-8-12 0 0 6 8 6 11 2" stroke="#fff" strokeWidth="2.800" />
    <path d="M5 18C2 14 14 4 20 6" stroke="#fff" strokeWidth="1.200" />
  </svg>
);
const HelpDoc = () => (
  <svg width="24" height="24" viewBox="0 0 24 24" fill="none">
    <path d="M4 8h11v13H4z" fill="#f2f2f2" stroke="#888" /><path d="M6 11h7M6 14h7M6 17h7" stroke="#777" strokeWidth="1.500" />
    <path d="M11.500 7c0-5 8-5 8-.500 0 3-4 3-4 6.500M15.500 15v3" stroke="#f7f01c" strokeWidth="3" />
  </svg>
);
const SMark = ({ size }: { size: number }) => (
  <svg width={size} height={size} viewBox="0 0 28 28" fill="none">
    <path d="M3 5l18-4c2 0 3 1 3 2l3 18c0 2-1 3-3 3L6 27c-2 0-3-1-3-3L1 8c0-2 1-3 2-3z" fill="#f0501e" />
    <path d="M21 6.500C14 5.500 7 7.500 7.500 11.500 8 15 20.500 12 20.500 17c0 4-8 5.500-14.500 4" stroke="#fff" strokeWidth="3.800" strokeLinecap="round" />
  </svg>
);

/* ---------- page ---------- */

export default function App() {
  return (
    <Shell>
      <Global />
      <TitleBar>
        <AppMark />
        <Title>广联达BIM钢筋算量软件 GGJ2013 - [C:\Users\Administrator.PC-20141127NRHM\Desktop\白龙村-2018-02-02-19-24-35(2666版).GGJ12]</Title>
        <WindowButtons>
          <WindowButton aria-label="最小化"><svg width="11" height="11"><path d="M0 5.500h11" stroke="#000" /></svg></WindowButton>
          <WindowButton aria-label="还原"><svg width="11" height="11" fill="none" stroke="#000"><path d="M.5 2.500h8v8h-8zM2.500 2V.500h8v8H9" /></svg></WindowButton>
          <WindowButton aria-label="关闭"><svg width="11" height="11" stroke="#000"><path d="M.5.500l10 10M10.500.500l-10 10" /></svg></WindowButton>
        </WindowButtons>
      </TitleBar>

      <MenuBar>
        {menu.map(([t, w]) => <MenuItem key={t} $w={w}>{t}</MenuItem>)}
        <MenuItem $w={87} as="div"><Tool icon="change" text="新建变更" caret /></MenuItem>
        <MenuItem $w={63} as="div"><Tool icon="robot" text="广小二" /></MenuItem>
        <MenuPanel><Tip href="#tip">如何快速布置自定义范..</Tip></MenuPanel>
        <MenuPanel $grow>
          <UserName><Icon name="user" />13907298339 <Caret /></UserName>
          <Coins>造价豆:0</Coins>
          <Icon name="bell" />
          <Spacer />
          <More aria-label="更多"><MoreMark /></More>
        </MenuPanel>
      </MenuBar>

      <ToolRow>
        <Band $w={151}>
          <Icon name="fresh" />
          <ToolButton><Icon name="open" /><CaretBox><Caret /></CaretBox></ToolButton>
          <Icon name="save" />
          <Sep />
          <ToolButton><Icon name="undo" /><CaretBox><Caret /></CaretBox></ToolButton>
          <Spacer /><More aria-label="更多"><MoreMark /></More>
        </Band>
        <Band $w={547} $pad={3}>
          <Tool icon="paint" text="绘图" />
          <Tool icon="sigma" text="汇总计算" />
          <Tool icon="cloud" text="云检查" />
          <Tool icon="flush" text="平齐板顶" off />
          <Tool icon="find" text="查找图元" off />
          <Tool icon="glasses" text="查看钢筋量" off />
          <Tool icon="batch" text="批量选择" off />
          <Spacer /><More aria-label="更多"><MoreMark /></More>
        </Band>
        <Band $pad={1}>
          <ComboFrame $boxed>
            <Icon name="plane" />
            <Combo aria-label="视图模式"><option>二维</option></Combo>
            <Caret color="#666" />
          </ComboFrame>
          <Tool icon="cube" text="俯视" off caret />
          <Tool icon="orbit" text="动态观察" off />
          <Tool icon="local3d" text="局部三维" off />
          <Sep />
          <Tool icon="full" text="全屏" off />
          <Tool icon="zoom" text="缩放" off caret />
          <Tool icon="pan" text="平移" off caret />
          <Tool icon="spin" text="屏幕旋转" off tight />
          <Sep />
          <Tool icon="floors" text="选择楼层" off />
          <Spacer /><More aria-label="更多"><MoreMark /></More>
        </Band>
      </ToolRow>

      <Body>
        <Nav>
          <NavHead>
            <NavTitle>模块导航栏</NavTitle>
            <svg width="9" height="10" viewBox="0 0 9 10" fill="none" stroke="#fff"><path d="M2.500 6V.500h4V6M5.500 1v5M1 6.500h7M4.500 7v3" /></svg>
            <svg width="9" height="9" viewBox="0 0 9 9" stroke="#fff"><path d="M.5.500l8 8M8.500.500l-8 8" /></svg>
          </NavHead>
          <NavButton>工程设置</NavButton>
          <NavButton>绘图输入</NavButton>
          <NavTools>
            <svg width="16" height="14" viewBox="0 0 16 14"><path d="M3 0h3v3h3v3H6v3H3V6H0V3h3zM10 5h3v3h3v3h-3v3h-3v-3H7V8h3z" fill="#002b2b" /><path d="M4 1h1v3h3v1H5v3H4V5H1V4h3zM11 6h1v3h3v1h-3v3h-1v-3H8V9h3z" fill="#0aa0a0" /></svg>
            <svg width="16" height="14" viewBox="0 0 16 14"><path d="M0 2h9v3H0zM7 8h9v3H7z" fill="#002b2b" /><path d="M1 3h7v1H1zM8 9h7v1H8z" fill="#0aa0a0" /></svg>
          </NavTools>
          <TreeFrame>
            <Tree>
              {modules.map((m, i) => (
                <Node key={i} $level={m.l ?? 0} $last={m.last}>
                  {!m.l && <Chevron><Chev dir={m.open ? 'down' : 'right'} color={m.open ? '#404040' : '#a6a6a6'} /></Chevron>}
                  <Icon name={m.i} />
                  <NodeText $on={m.on}>{m.t}</NodeText>
                </Node>
              ))}
            </Tree>
            <Bar>
              <Arrow aria-label="向上"><Chev dir="up" /></Arrow>
              <Track $grow={49} /><Thumb $grow={359} /><Track $grow={25} />
              <Arrow aria-label="向下"><Chev dir="down" /></Arrow>
            </Bar>
            <Bar $flat>
              <Arrow aria-label="向左"><Chev dir="left" /></Arrow>
              <Thumb $grow={102} /><Track $grow={6} />
              <Arrow aria-label="向右"><Chev dir="right" /></Arrow>
            </Bar>
            <Corner />
          </TreeFrame>
          <NavButton>单构件输入</NavButton>
          <NavButton>报表预览</NavButton>
        </Nav>

        <Work>
          <ComponentBar $gap={6}>
            <Tool icon="add" text="新建" tight />
            <Tool icon="del" text="删除" />
            <Tool icon="copy" text="复制" />
            <Tool icon="rename" text="重命名" />
            <Sep />
            <ToolButton as="span">楼层</ToolButton>
            <ComboFrame>
              <Combo aria-label="楼层"><option>首层</option></Combo>
              <Caret />
            </ComboFrame>
            <Sep />
            <Tool icon="sort" text="排序" tight />
            <Tool icon="filter" text="过滤" tight />
            <Sep />
            <Tool icon="fromFloor" text="从其他楼层复制构件" />
            <Tool icon="toFloor" text="复制构件到其他楼层" />
            <Sep $room />
            <Tool text="查找" tight />
            <Sep $room />
            <Tool icon="up" text="上移" off />
            <Tool icon="up" text="下移" />
          </ComponentBar>
          <Columns>
            <ListPanel>
              <SearchRow>
                <Search aria-label="搜索构件" placeholder="搜索构件..." />
                <SearchButton aria-label="搜索"><Icon name="search" /></SearchButton>
              </SearchRow>
              <ListBox>
                <RootItem><Chev dir="down" color="#404040" /><Icon name="wall" />剪力墙</RootItem>
                {Array.from({ length: 17 }, (_, i) => (
                  <Item key={i} $last={i === 16}>
                    <ItemLabel $on={i === 0}><Gear />JLQ-{i + 1}</ItemLabel>
                  </Item>
                ))}
              </ListBox>
            </ListPanel>
            <Editor>
              <TabStrip><Tab>属性编辑</Tab><TabRest /></TabStrip>
              <GridFrame>
                <GridView>
                  <Table>
                    <thead>
                      <tr><Head $w={21} /><Head $w={191}>属性名称</Head><Head $w={126} $hot>属性值</Head><Head $w={31}>附加</Head></tr>
                    </thead>
                    <tbody>
                      {props.map((p, i) => (
                        <tr key={i}>
                          <RowHead $on={p.sel}>{i + 1}</RowHead>
                          <Cell $bg={p.sel ? '#0078d7' : undefined} $color={nameColor(p)}>
                            <NameLine>
                              <Guide $kind={p.k ?? 'none'}>
                                {p.k === 'group' && <Fold aria-label="折叠"><svg width="7" height="1"><path d="M0 .5h7" stroke="#000" /></svg></Fold>}
                              </Guide>
                              {p.n}
                            </NameLine>
                          </Cell>
                          <Cell $bg={p.sel ? '#d9e9f7' : undefined}><ValueLine>{p.v}</ValueLine></Cell>
                          <Cell>{p.c && <Check type="checkbox" aria-label={p.n} />}</Cell>
                        </tr>
                      ))}
                    </tbody>
                  </Table>
                </GridView>
                <GridBar>
                  <Arrow aria-label="向上"><Chev dir="up" /></Arrow>
                  <Thumb $grow={338} /><Track $grow={189} />
                  <Arrow aria-label="向下"><Chev dir="down" /></Arrow>
                </GridBar>
              </GridFrame>
            </Editor>
          </Columns>
        </Work>
        <Highlight />
      </Body>

      <Status>
        <StatusCell $w={147} />
        <StatusCell $w={77}>层高:4.5m</StatusCell>
        <StatusCell $w={97}>底标高:-0.05m</StatusCell>
        <StatusCell $w={47}>0</StatusCell>
        <StatusCell>缺省为当前楼层设置中剪力墙构件类型的抗震等级。</StatusCell>
        <StatusCell $w={68}>239 FPS</StatusCell>
      </Status>

      <TaskBar>
        <Start aria-label="开始"><svg width="16" height="16" viewBox="0 0 16 16" fill="#fff"><path d="M0 2.200L6.800 1.200v6.300H0zM7.600 1.100L16 0v7.500H7.600zM0 8.400h6.800v6.400L0 13.800zM7.600 8.400H16V16l-8.400-1.200z" /></svg></Start>
        <TaskSearch>
          <svg width="24" height="24" viewBox="0 0 24 24" fill="none"><circle cx="12" cy="12" r="9" stroke="#f4f4f4" strokeWidth="2.500" /></svg>
          <TaskInput placeholder="在这里输入你要搜索的内容" aria-label="搜索" />
          <svg width="14" height="18" viewBox="0 0 14 18" fill="none" stroke="#9c9c9c"><path d="M4.500 1.500h5v9h-5zM1.500 8v5.500h11V8M7 13.500V17M4 16.500h6" /></svg>
        </TaskSearch>
        <Pinned>
          <TaskApp $wide aria-label="任务视图"><svg width="20" height="16" viewBox="0 0 20 16" fill="none" stroke="#fff"><path d="M4.500 1.500h11v13h-11zM2.500 3.500h-2v9h2M17.500 3.500h2v9h-2" /></svg></TaskApp>
          <TaskApp $wide aria-label="应用">
            <svg width="22" height="22" viewBox="0 0 22 22" fill="#e8e8e8"><path d="M10.500 9.500C6 12 0 10 .5 5.500 1 1 8 0 10 3.500c1 2 .5 4 .5 6zM12 10c-2-4-1-9.500 4-9.500s6 6.500 3.500 8.500c-2 1.500-5 1-7.500 1zM11.500 12.500C16 10 22 12 21.500 16.500 21 21 14 22 12 18.500c-1-2-.5-4-.5-6zM10 12c2 4 1 9.500-4 9.500S0 15 2.500 13c2-1.500 5-1 7.500-1z" /></svg>
          </TaskApp>
          <TaskApp $wide aria-label="浏览器"><EMark a="#e8e8e8" b="#e8e8e8" /></TaskApp>
          <TaskApp $wide aria-label="工具"><GSwirl a="#e0e0e0" /></TaskApp>
        </Pinned>
        <TaskApp aria-label="Edge"><EdgeMark /></TaskApp>
        <TaskApp aria-label="IE"><EMark a="#41a9ea" b="#f3c431" /></TaskApp>
        <TaskApp aria-label="文件"><svg width="22" height="20" viewBox="0 0 22 20"><path d="M0 1h8l2 2h12v16H0z" fill="#f9dc7c" /><path d="M1 6h20v2H1z" fill="#fdf0b8" /><path d="M4 19v-7h14v7h-4v-3H8v3z" fill="#3c9fdc" /></svg></TaskApp>
        <TaskApp $open aria-label="广联达"><GSwirl a="#1b9df0" bold /></TaskApp>
        <TaskApp $open aria-label="浏览器"><EDisc /></TaskApp>
        <TaskApp $open aria-label="便笺"><svg width="24" height="24" viewBox="0 0 24 24"><rect width="24" height="24" rx="3" fill="#ef9a22" /><path d="M4 5h12l2 14-13 1z" fill="#fffbe8" /><path d="M7 9h7M7 12h8M7 15h6" stroke="#a9772b" /><path d="M22 2l-9 13-1 4 4-3 7-12z" fill="#b8501a" stroke="#fff" strokeWidth=".6" /></svg></TaskApp>
        <TaskApp $open $on aria-label="算量软件"><AppMark size={24} /></TaskApp>
        <TaskApp $open aria-label="帮助"><HelpDoc /></TaskApp>
        <TaskApp $open aria-label="图集"><svg width="24" height="24" viewBox="0 0 24 24"><rect width="24" height="24" rx="3" fill="#1878d0" /><path d="M3 6c4-2 7-1 9 1 2-2 5-3 9-1v13H3z" fill="#f6f1e2" stroke="#b9a67a" /><path d="M12 7v12" stroke="#999" /><circle cx="15" cy="8" r="4" fill="#cfe8fb" stroke="#5c8fc0" strokeWidth="1.500" /><path d="M18 11l4 4" stroke="#5c8fc0" strokeWidth="2" /></svg></TaskApp>
        <TaskApp $open aria-label="帮助"><HelpDoc /></TaskApp>
        <Tray>
          <TrayItem $w={28}>链接</TrayItem>
          <TrayItem $w={26} aria-label="显示隐藏的图标"><svg width="12" height="8" viewBox="0 0 12 8" fill="none" stroke="#fff" strokeWidth="1.300"><path d="M1 7l5-5 5 5" /></svg></TrayItem>
          <TrayItem $w={24} aria-label="电池"><svg width="17" height="12" viewBox="0 0 17 12" fill="none" stroke="#fff"><path d="M5.500 3.500h9v6h-9zM15.500 5v3M1 1.500h5M1.500 1v3c0 2 3 2 3 0V1M3 6v4h2" /><path d="M8 5.500h5v2H8z" fill="#fff" /></svg></TrayItem>
          <TrayItem $w={24} aria-label="网络"><svg width="14" height="14" viewBox="0 0 14 14" fill="none" stroke="#ddd"><path d="M1 9C3 4 7 2 13 2M3 11C5 7 8 5 13 5M6 12C7 10 9 8 13 8M9 13c1-1 2-2 4-2" /><path d="M10 12h3" /></svg></TrayItem>
          <TrayItem $w={24} aria-label="音量"><svg width="17" height="14" viewBox="0 0 17 14" fill="none" stroke="#fff"><path d="M1 5h2.500L7 1.500v11L3.500 9H1zM9.500 4.500c1 1.500 1 3.500 0 5M11.500 2.500c2 2.500 2 6.500 0 9M13.500 1c3 3.500 3 8.500 0 12" /></svg></TrayItem>
          <TrayItem $w={32} aria-label="键盘"><svg width="23" height="13" viewBox="0 0 23 13" fill="none" stroke="#fff"><path d="M.5.500h22v12H.5z" /><path d="M3 3.500h17M3 6.500h17" strokeDasharray="2 1" /><path d="M3 9.500h2M6 9.500h11M18 9.500h2" /></svg></TrayItem>
          <InputMode $w={26}>中</InputMode>
          <TrayItem $w={28} aria-label="输入法"><SMark size={16} /></TrayItem>
          <Clock>9:34<br />2018/4/15</Clock>
          <Notice aria-label="通知">
            <svg width="25" height="25" viewBox="0 0 25 25"><path d="M1 2h15v11H7l-3 3v-3H1z" fill="#fff" /><path d="M3 5h11M3 8h11M3 11h8" stroke="#000" /><circle cx="16" cy="16" r="7.500" fill="#222" stroke="#777" /><path d="M14 13.500l2.500-1.500v8" fill="none" stroke="#fff" strokeWidth="1.500" /></svg>
          </Notice>
        </Tray>
      </TaskBar>

      <Ball>66</Ball>
      <Ime>
        <ImeLogo><SMark size={28} /></ImeLogo>
        <ImeKey>英</ImeKey>
        <ImeKey aria-label="标点"><svg width="12" height="12" viewBox="0 0 12 12" fill="currentColor"><circle cx="3" cy="4" r="2" /><path d="M7 7h3c1 2-1 4-3 4 1-1 1-1 0-4z" /></svg></ImeKey>
        <ImeKey aria-label="表情"><svg width="16" height="16" viewBox="0 0 16 16" fill="none" stroke="currentColor" strokeWidth="1.600"><circle cx="8" cy="8" r="7" /><path d="M4.500 9c1 3.500 6 3.500 7 0M5.500 4.500v2.500M10.500 4.500v2.500" /></svg></ImeKey>
        <ImeKey aria-label="语音"><svg width="14" height="16" viewBox="0 0 14 16" fill="none" stroke="currentColor" strokeWidth="1.600"><rect x="4.500" y="1" width="5" height="8" rx="2.500" fill="currentColor" /><path d="M1.500 6c0 7 11 7 11 0M7 12v3M4 15h6" /></svg></ImeKey>
        <ImeKey aria-label="软键盘"><svg width="16" height="12" viewBox="0 0 16 12" fill="none" stroke="currentColor"><rect x=".8" y=".8" width="14.400" height="10.400" rx="1" strokeWidth="1.600" /><path d="M3 4h10M3 6.500h10" strokeWidth="1.500" strokeDasharray="2 .7" /><path d="M5 9h6" strokeWidth="1.300" /></svg></ImeKey>
        <ImeKey $w={26} aria-label="账户"><svg width="17" height="16" viewBox="0 0 17 16" fill="#b5c0d2"><circle cx="6" cy="4" r="3.200" /><path d="M0 13c0-6 10-7 11-3v3z" /><path d="M4.500 8.500h12v6h-12z" fill="#fff" stroke="#b5c0d2" /><path d="M6 10.500h3v1.500H6.500v1.500H9M11 10.500h3v1.500h-2.500v1.500H14" fill="none" stroke="#b5c0d2" /></svg></ImeKey>
        <ImeKey $w={18} aria-label="皮肤"><svg width="14" height="14" viewBox="0 0 14 14" fill="currentColor"><path d="M4 1c1 2 5 2 6 0l4 2-1 4-2-.5V13H3V6.500L1 7 0 3z" /></svg></ImeKey>
        <ImeKey $w={26} aria-label="工具"><svg width="15" height="15" viewBox="0 0 15 15" fill="currentColor"><path d="M14 3.500L11.500 6 9 5.500 8.500 3 11 .7C8 0 5.500 2.500 6.200 5.500L.8 11c-1.500 2 1 4 3 2.700L9.200 8.500C12.500 9 15 6.500 14 3.500z" /></svg></ImeKey>
      </Ime>
    </Shell>
  );
}
